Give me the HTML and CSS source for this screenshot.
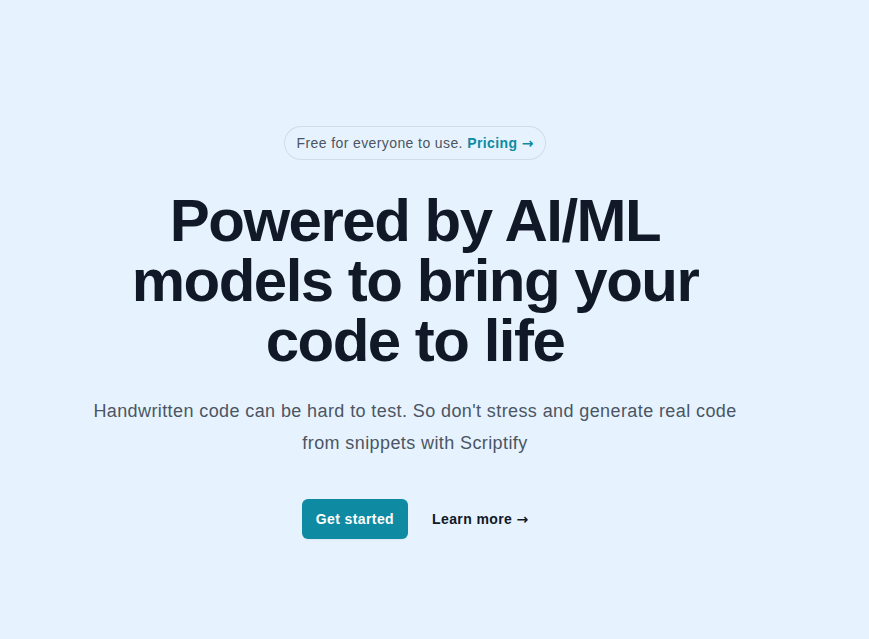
FILE: index.html
```html
<!DOCTYPE html>
<html lang="en">
<head>
<meta charset="utf-8">
<title>Scriptify</title>
<link rel="stylesheet" href="styles.css">
</head>
<body>
<main class="hero">
  <div class="badge-row">
    <div class="badge">Free for everyone to use. <a href="#" class="badge-link">Pricing <span class="arrow" aria-hidden="true">&rarr;</span></a></div>
  </div>
  <h1 class="title">Powered by AI/ML models to bring your code to life</h1>
  <p class="lead">Handwritten code can be hard to test. So don't stress and generate real code from snippets with Scriptify</p>
  <div class="actions">
    <a href="#" class="btn-primary">Get started</a>
    <a href="#" class="btn-link">Learn more <span class="arrow" aria-hidden="true">&rarr;</span></a>
  </div>
</main>
</body>
</html>
```

FILE: styles.css
```css
* { box-sizing: border-box; }
html, body { margin: 0; padding: 0; }
body {
  background: #e6f3fe;
  font-family: "Liberation Sans", Arial, Helvetica, sans-serif;
  letter-spacing: 0.025em;
  min-height: 639px;
  overflow: hidden;
}
.hero {
  width: 672px;
  margin-left: 79px;
  padding-top: 127px;
  text-align: center;
}
.badge-row {
  display: flex;
  justify-content: center;
  margin-bottom: 32px;
}
.badge {
  border-radius: 9999px;
  padding: 4px 12px;
  font-size: 14px;
  line-height: 24px;
  color: #4b5563;
  box-shadow: 0 0 0 1px rgba(17, 24, 39, 0.1);
}
.badge-link {
  font-weight: 700;
  color: #0e8aa2;
  text-decoration: none;
}
.arrow {
  font-family: "DejaVu Sans", sans-serif;
  letter-spacing: 0;
}
.title {
  margin: 0;
  font-size: 60px;
  line-height: 60px;
  font-weight: 700;
  letter-spacing: -0.025em;
  color: #111827;
}
.lead {
  margin: 24px 0 0;
  font-size: 18px;
  line-height: 32px;
  color: #4b5563;
}
.actions {
  margin-top: 40px;
  display: flex;
  justify-content: center;
  align-items: center;
  gap: 24px;
}
.btn-primary {
  display: inline-block;
  background: #0e8aa2;
  color: #ffffff;
  font-size: 14px;
  line-height: 20px;
  font-weight: 700;
  padding: 10px 14px;
  border-radius: 6px;
  text-decoration: none;
  box-shadow: 0 1px 2px rgba(0,0,0,0.05);
}
.btn-link {
  font-size: 14px;
  line-height: 24px;
  font-weight: 700;
  color: #111827;
  text-decoration: none;
}
```
